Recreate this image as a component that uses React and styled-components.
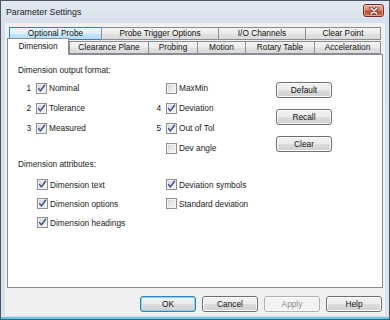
import React from 'react';
import styled, { createGlobalStyle } from 'styled-components';

const GlobalStyle = createGlobalStyle`
	html, body {
		margin: 0;
		padding: 0;
		background: #ffffff;
	}
	body {
		font-family: "Liberation Sans", Arial, sans-serif;
		color: #1a1a1a;
	}
`;

const FONT = '8.3px';

const Window = styled.div`
	width: 390px;
	height: 320px;
	box-sizing: border-box;
	border: 1px solid #4b5563;
	border-bottom: 1px solid #1f6f92;
	background: linear-gradient(180deg, #e2e9f2 0%, #d7e0eb 22px, #d9e2ec 100%);
	padding: 0 4px 3px;
	display: flex;
	flex-direction: column;
	box-shadow: inset 0 -2px 0 #6fc3e2;
`;

const TitleBar = styled.div`
	height: 22px;
	display: flex;
	align-items: flex-start;
	justify-content: space-between;
`;

const Title = styled.span`
	font-size: 8.8px;
	line-height: 22px;
	margin-left: 1px;
	color: #1b1b1b;
`;

const CloseButton = styled.div`
	width: 21px;
	height: 13px;
	margin-top: 3px;
	margin-right: 1px;
	box-sizing: border-box;
	border: 1px solid #7a2e24;
	border-radius: 3px;
	background: linear-gradient(180deg, #eab2a4 0%, #d98873 45%, #c54b32 55%, #d26a52 100%);
	box-shadow: inset 0 0 0 1px rgba(255, 220, 210, 0.5);
	display: flex;
	align-items: center;
	justify-content: center;
`;

const Client = styled.div`
	flex: 1;
	background: #f0f0f0;
	padding: 4px 0 4px;
	display: flex;
	flex-direction: column;
`;

const TabRow = styled.div`
	display: flex;
	align-items: flex-start;
	height: ${p => p.$h}px;
	margin-left: ${p => p.$indent}px;
`;

const Tab = styled.div`
	position: relative;
	box-sizing: border-box;
	width: ${p => p.$w}px;
	height: ${p => (p.$selected ? 17 : 13)}px;
	margin-top: ${p => (p.$selected ? -2 : p.$top || 0)}px;
	margin-left: ${p => p.$ml || 0}px;
	border: 1px solid ${p => (p.$hover ? '#3c7fb1' : '#898c95')};
	border-bottom: ${p => (p.$selected ? 'none' : undefined)};
	background: ${p =>
		p.$selected
			? '#ffffff'
			: p.$hover
			? 'linear-gradient(180deg, #eaf6fd 0%, #d9f0fc 50%, #c6e6fa 51%, #b5dcf5 100%)'
			: 'linear-gradient(180deg, #f3f3f3 0%, #ebebeb 50%, #e1e1e1 51%, #dadada 100%)'};
	z-index: ${p => (p.$selected ? 2 : 0)};
	font-size: ${FONT};
	line-height: ${p => (p.$selected ? 14 : 11)}px;
	text-align: center;
	white-space: nowrap;
	color: #111;
`;

const Panel = styled.div`
	position: relative;
	z-index: 1;
	box-sizing: border-box;
	height: 234px;
	margin: 0 2px;
	border: 1px solid #898c95;
	background: #ffffff;
	padding: 9px 0 0 10px;
	font-size: ${FONT};
`;

const SectionLabel = styled.div`
	line-height: 12px;
	height: 12px;
`;

const OptionGrid = styled.div`
	display: grid;
	grid-template-columns: 130px 128px 56px;
	margin-top: ${p => p.$top}px;
`;

const Column = styled.div`
	display: flex;
	flex-direction: column;
	padding-left: ${p => p.$pad || 0}px;
`;

const ButtonColumn = styled.div`
	display: flex;
	flex-direction: column;
	gap: 11px;
	padding-top: 4px;
`;

const Row = styled.div`
	display: flex;
	align-items: center;
	height: ${p => p.$h}px;
	white-space: nowrap;
`;

const Num = styled.span`
	width: 18px;
	box-sizing: border-box;
	padding-right: 5px;
	text-align: right;
`;

const Box = styled.span`
	width: 11px;
	height: 11px;
	box-sizing: border-box;
	border: 1px solid #8f8f8f;
	background: linear-gradient(135deg, #d0d0d0 0%, #ececec 60%, #f7f7f7 100%);
	box-shadow: inset 0 0 0 1px #f4f4f4;
	display: inline-flex;
	align-items: center;
	justify-content: center;
	flex: none;
`;

const Label = styled.span`
	margin-left: 2px;
`;

const Button = styled.div`
	box-sizing: border-box;
	width: 56px;
	height: 16px;
	border: 1px solid ${p => (p.$default ? '#3c7fb1' : p.$disabled ? '#adb2b5' : '#707070')};
	border-radius: 3px;
	background: ${p =>
		p.$disabled
			? '#f4f4f4'
			: 'linear-gradient(180deg, #f2f2f2 0%, #ebebeb 50%, #dddddd 51%, #cfcfcf 100%)'};
	box-shadow: inset 0 0 0 1px ${p => (p.$default ? '#7fd6f5' : '#fbfbfb')};
	font-size: ${FONT};
	line-height: 14px;
	text-align: center;
	color: ${p => (p.$disabled ? '#8d8d8d' : '#111')};
`;

const Footer = styled.div`
	display: flex;
	justify-content: flex-end;
	gap: 6px;
	margin-top: 8px;
	padding-right: 3px;
`;

const CheckBox = ({ checked }) => (
	<Box>
		{checked && (
			<svg width="9" height="9" viewBox="0 0 9 9">
				<path d="M1.6 4.6 L3.4 6.9 L7.6 1.2" fill="none" stroke="#3b4f8c" strokeWidth="1.5" strokeLinecap="round" strokeLinejoin="round" />
			</svg>
		)}
	</Box>
);

const Option = ({ num, checked, label, h = 20 }) => (
	<Row $h={h}>
		<Num>{num}</Num>
		<CheckBox checked={checked} />
		<Label>{label}</Label>
	</Row>
);

const Attr = ({ checked, label }) => (
	<Row $h={19}>
		<CheckBox checked={checked} />
		<Label>{label}</Label>
	</Row>
);

const backTabs = [
	{ label: 'Optional Probe', w: 93, hover: true },
	{ label: 'Probe Trigger Options', w: 118 },
	{ label: 'I/O Channels', w: 88 },
	{ label: 'Clear Point', w: 76 },
];

const frontTabs = [
	{ label: 'Dimension', w: 62, selected: true },
	{ label: 'Clearance Plane', w: 80 },
	{ label: 'Probing', w: 50 },
	{ label: 'Motion', w: 49 },
	{ label: 'Rotary Table', w: 70 },
	{ label: 'Acceleration', w: 67 },
];

export default function App() {
	return (
		<>
			<GlobalStyle />
			<Window>
				<TitleBar>
					<Title>Parameter Settings</Title>
					<CloseButton>
						<svg width="10" height="8" viewBox="0 0 10 8">
							<path d="M2 1 L8 7 M8 1 L2 7" stroke="#5b1e16" strokeWidth="3" strokeLinecap="round" />
							<path d="M2 1 L8 7 M8 1 L2 7" stroke="#ffffff" strokeWidth="1.6" strokeLinecap="round" />
						</svg>
					</CloseButton>
				</TitleBar>
				<Client>
					<TabRow $h={13} $indent={4}>
						{backTabs.map((t, i) => (
							<Tab key={t.label} $w={t.w} $hover={t.hover} $ml={i ? -1 : 0}>
								{t.label}
							</Tab>
						))}
					</TabRow>
					<TabRow $h={14} $indent={2}>
						{frontTabs.map((t, i) => (
							<Tab key={t.label} $w={t.w} $selected={t.selected} $top={1} $ml={i > 1 ? -1 : 0}>
								{t.label}
							</Tab>
						))}
					</TabRow>
					<Panel>
						<SectionLabel>Dimension output format:</SectionLabel>
						<OptionGrid $top={2}>
							<Column>
								<Option num="1" checked label="Nominal" />
								<Option num="2" checked label="Tolerance" />
								<Option num="3" checked label="Measured" />
							</Column>
							<Column>
								<Option num="" label="MaxMin" />
								<Option num="4" checked label="Deviation" />
								<Option num="5" checked label="Out of Tol" />
								<Option num="" label="Dev angle" />
							</Column>
							<ButtonColumn>
								<Button>Default</Button>
								<Button>Recall</Button>
								<Button>Clear</Button>
							</ButtonColumn>
						</OptionGrid>
						<SectionLabel>Dimension attributes:</SectionLabel>
						<OptionGrid $top={5}>
							<Column $pad={19}>
								<Attr checked label="Dimension text" />
								<Attr checked label="Dimension options" />
								<Attr checked label="Dimension headings" />
							</Column>
							<Column $pad={18}>
								<Attr checked label="Deviation symbols" />
								<Attr label="Standard deviation" />
							</Column>
						</OptionGrid>
					</Panel>
					<Footer>
						<Button $default>OK</Button>
						<Button>Cancel</Button>
						<Button $disabled>Apply</Button>
						<Button>Help</Button>
					</Footer>
				</Client>
			</Window>
		</>
	);
}
